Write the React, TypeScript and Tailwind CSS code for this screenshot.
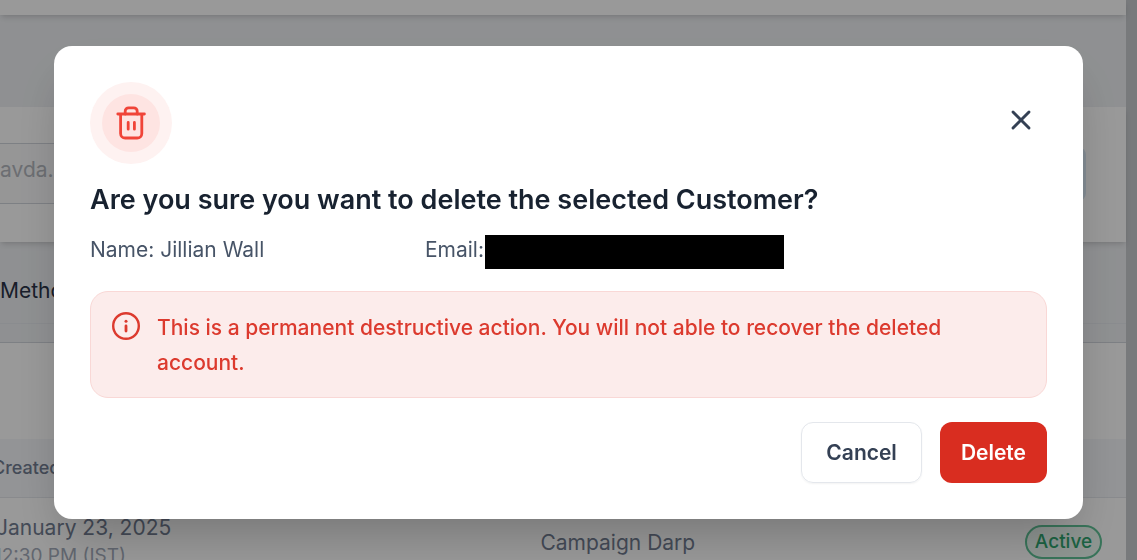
import { X } from "lucide-react";
import { useState } from "react";

function TrashIcon() {
  return (
    <svg
      viewBox="0 0 30 34"
      className="h-[34px] w-[30px]"
      fill="none"
      stroke="currentColor"
      strokeWidth="2.8"
      strokeLinecap="round"
      strokeLinejoin="round"
      aria-hidden="true"
    >
      <path d="M1.8 8h26.6" />
      <path d="M9.2 8V5.2a3.4 3.4 0 0 1 3.4-3.4h5.2a3.4 3.4 0 0 1 3.4 3.4V8" />
      <path d="M4.6 8.4v19a4.6 4.6 0 0 0 4.6 4.6h12a4.6 4.6 0 0 0 4.6-4.6v-19" />
      <path d="M12.2 16.4v6.8M18.4 16.4v6.8" />
    </svg>
  );
}

function InfoIcon() {
  return (
    <svg viewBox="0 0 28 28" className="mt-0.5 size-7 shrink-0" fill="none" stroke="currentColor" aria-hidden="true">
      <circle cx="14" cy="14" r="12.8" strokeWidth="2.4" />
      <path d="M14 14v5" strokeWidth="2.8" strokeLinecap="round" />
      <circle cx="14" cy="9.2" r="1.5" fill="currentColor" stroke="none" />
    </svg>
  );
}

function CustomerPage() {
  return (
    <div className="flex h-screen overflow-hidden bg-[#c8cbcf]">
      <main className="mr-[11px] flex flex-1 flex-col bg-[#eff1f4]">
        <header className="h-[15px] shrink-0 bg-white shadow-md" />
        <section className="mt-[92px] flex h-[135px] shrink-0 items-start justify-between bg-white pt-9 pr-10 shadow-md">
          <input
            type="text"
            aria-label="Email"
            defaultValue="avda.com"
            className="h-[61px] w-[400px] border-y border-gray-300 bg-[#fafafb] pb-2 text-[21px] text-[#b4b8bf]"
          />
          <button type="button" aria-label="Search" className="mt-1 h-[54px] w-40 rounded-lg bg-[#dbe9f7]" />
        </section>
        <h3 className="mt-8 text-[21px] leading-[34px] text-[#2a3347]">Methods</h3>
        <div className="mt-[15px] h-[19px] shrink-0 border-t border-[#e6e9ee]" />
        <div className="h-[97px] shrink-0 border-t border-gray-300 bg-white" />
        <table className="w-full shrink-0 table-fixed bg-white text-left text-[#727d92]">
          <thead>
            <tr className="h-[58px] border-b border-[#e4e7ec] bg-[#f5f7fa] text-[18px]">
              <th className="w-[48%] font-medium">
                <div className="-ml-2">Created</div>
              </th>
              <th className="w-[40%]" />
              <th />
            </tr>
          </thead>
          <tbody>
            <tr className="h-[90px]">
              <td>
                <div className="-ml-1 text-[21px] leading-7">January 23, 2025</div>
                <div className="-ml-1.5 text-[19px] leading-7 text-[#a3abba]">12:30 PM (IST)</div>
              </td>
              <td className="text-[21px]">Campaign Darp</td>
              <td className="pl-[34px]">
                <span className="inline-flex h-[34px] items-center rounded-full border-2 border-[#5fc296] bg-[#ecf8f2] px-2 text-[19px] font-medium text-[#2fa56f]">
                  Active
                </span>
              </td>
            </tr>
          </tbody>
        </table>
      </main>
    </div>
  );
}

export default function App() {
  const [open, setOpen] = useState<boolean>(true);
  const close = () => setOpen(false);

  return (
    <div className="font-['Inter',sans-serif]">
      <CustomerPage />
      {open && (
        <div className="fixed inset-0 bg-black/40 px-[54px] pt-[46px]">
          <div
            role="dialog"
            aria-modal="true"
            aria-labelledby="dialog-title"
            className="rounded-[18px] bg-white p-9 shadow-2xl"
          >
            <div className="flex items-start justify-between">
              <div className="flex size-[82px] items-center justify-center rounded-full bg-[#fef2f1]">
                <div className="flex size-[58px] items-center justify-center rounded-full bg-[#fee4e2] text-[#f04438]">
                  <TrashIcon />
                </div>
              </div>
              <button type="button" aria-label="Close" onClick={close} className="mt-[22px] mr-2.5 text-[#344054]">
                <X size={32} strokeWidth={2.2} />
              </button>
            </div>
            <h2 id="dialog-title" className="mt-4 text-[27px] leading-10 font-semibold text-[#182230]">
              Are you sure you want to delete the selected Customer?
            </h2>
            <div className="mt-3 flex items-start text-[21px] leading-9 text-[#475467]">
              <p className="w-[35%]">Name: Jillian Wall</p>
              <p className="flex items-start">
                Email:
                <span className="mt-[3px] ml-px h-[34px] w-[299px] bg-black" />
              </p>
            </div>
            <div className="mt-[22px] flex gap-[17px] rounded-[18px] border border-[#f9d8d6] bg-[#fceceb] px-[21px] pt-[18px] pb-[17px] text-[21px] leading-[35px] font-medium text-[#dc3a2e]">
              <InfoIcon />
              <p>This is a permanent destructive action. You will not able to recover the deleted account.</p>
            </div>
            <div className="mt-6 flex justify-end gap-[18px] text-[21px] font-semibold">
              <button
                type="button"
                onClick={close}
                className="h-[61px] rounded-xl border border-[#e4e7ec] px-6 text-[#344054] shadow-xs"
              >
                Cancel
              </button>
              <button type="button" onClick={close} className="h-[61px] rounded-xl bg-[#d92d20] px-[21px] text-white">
                Delete
              </button>
            </div>
          </div>
        </div>
      )}
    </div>
  );
}
